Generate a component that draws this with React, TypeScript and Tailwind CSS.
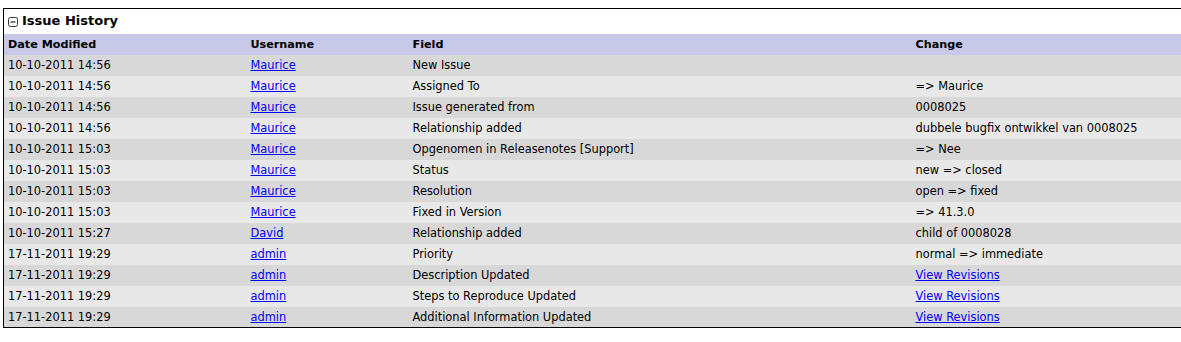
const rows: [string, string, string, string, boolean?][] = [
  ['10-10-2011 14:56', 'Maurice', 'New Issue', ''],
  ['10-10-2011 14:56', 'Maurice', 'Assigned To', '=> Maurice'],
  ['10-10-2011 14:56', 'Maurice', 'Issue generated from', '0008025'],
  ['10-10-2011 14:56', 'Maurice', 'Relationship added', 'dubbele bugfix ontwikkel van 0008025'],
  ['10-10-2011 15:03', 'Maurice', 'Opgenomen in Releasenotes [Support]', '=> Nee'],
  ['10-10-2011 15:03', 'Maurice', 'Status', 'new => closed'],
  ['10-10-2011 15:03', 'Maurice', 'Resolution', 'open => fixed'],
  ['10-10-2011 15:03', 'Maurice', 'Fixed in Version', '=> 41.3.0'],
  ['10-10-2011 15:27', 'David', 'Relationship added', 'child of 0008028'],
  ['17-11-2011 19:29', 'admin', 'Priority', 'normal => immediate'],
  ['17-11-2011 19:29', 'admin', 'Description Updated', 'View Revisions', true],
  ['17-11-2011 19:29', 'admin', 'Steps to Reproduce Updated', 'View Revisions', true],
  ['17-11-2011 19:29', 'admin', 'Additional Information Updated', 'View Revisions', true],
];

export default function App() {
  return (
    <div className="bg-white w-[1181px] h-[342px] overflow-hidden pt-[8px] pl-[3px] font-['DejaVu_Sans','Verdana',sans-serif] text-black">
      <table className="w-[1180px] border-collapse border border-black table-fixed">
        <colgroup>
          <col className="w-[243px]" />
          <col className="w-[162px]" />
          <col className="w-[503px]" />
          <col />
        </colgroup>
        <thead>
          <tr className="h-[25px]">
            <td colSpan={4} className="px-[4px] pt-[1px] text-[13px] font-bold">
              <span className="inline-flex items-center gap-[4px]">
                <svg width="10" height="10" viewBox="0 0 10 10" className="mt-[1px]">
                  <rect x="0.5" y="0.5" width="9" height="9" rx="2" fill="none" stroke="#333" />
                  <line x1="2.5" y1="5" x2="7.5" y2="5" stroke="#000" />
                </svg>
                Issue History
              </span>
            </td>
          </tr>
          <tr className="h-[21px] bg-[#c8c8e8] text-[11.2px] font-bold text-left">
            <th className="px-[4px] pt-[2px] pb-0">Date Modified</th>
            <th className="px-[4px] pt-[2px] pb-0">Username</th>
            <th className="px-[4px] pt-[2px] pb-0">Field</th>
            <th className="px-[4px] pt-[2px] pb-0">Change</th>
          </tr>
        </thead>
        <tbody className="text-[11.4px]">
          {rows.map(([date, user, field, change, link], i) => (
            <tr key={i} className={`h-[21px] ${i % 2 === 0 ? 'bg-[#d8d8d8]' : 'bg-[#e8e8e8]'}`}>
              <td className="px-[4px] pt-[2px] pb-0">{date}</td>
              <td className="px-[4px] pt-[2px] pb-0">
                <a href="#" className="text-[#0000ff] underline">{user}</a>
              </td>
              <td className="px-[4px] pt-[2px] pb-0">{field}</td>
              <td className="px-[4px] pt-[2px] pb-0">
                {link ? (
                  <a href="#" className="text-[#0000ff] underline">{change}</a>
                ) : (
                  change
                )}
              </td>
            </tr>
          ))}
        </tbody>
      </table>
    </div>
  );
}
